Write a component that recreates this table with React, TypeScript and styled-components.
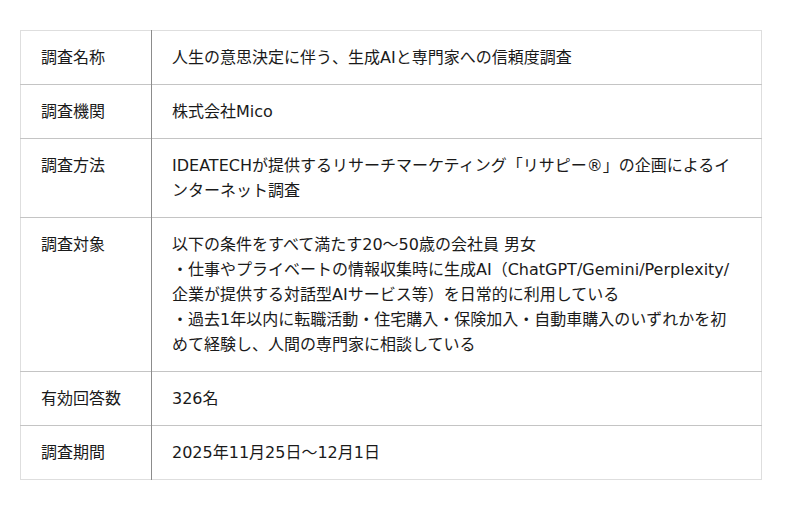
import React from 'react'
import styled, { createGlobalStyle } from 'styled-components'

const GlobalStyle = createGlobalStyle`
  body {
    margin: 0;
    background: #fff;
    font-family: "DejaVu Sans", "Noto Sans CJK JP", sans-serif;
    color: #1a1a1a;
  }
`

const Page = styled.div`
  padding: 30px 0 0 20px;
`

const Table = styled.table`
  width: 742px;
  border-collapse: collapse;
  border: 1px solid #dedede;
  font-size: 16px;
  line-height: 25px;
`

const Row = styled.tr`
  border-bottom: 1px solid #c4c4c4;
  &:last-child {
    border-bottom: 1px solid #dedede;
  }
`

const Label = styled.th`
  width: 90px;
  padding: 14px 20px;
  text-align: left;
  font-weight: normal;
  vertical-align: top;
  border-right: 1px solid #8c8c8c;
  white-space: nowrap;
`

const Value = styled.td`
  padding: 14px 20px;
  vertical-align: top;
`

const rows: [string, React.ReactNode][] = [
  ['調査名称', '人生の意思決定に伴う、生成AIと専門家への信頼度調査'],
  ['調査機関', '株式会社Mico'],
  ['調査方法', 'IDEATECHが提供するリサーチマーケティング「リサピー®」の企画によるインターネット調査'],
  [
    '調査対象',
    <>
      以下の条件をすべて満たす20～50歳の会社員 男女
      <br />
      ・仕事やプライベートの情報収集時に生成AI（ChatGPT/Gemini/Perplexity/企業が提供する対話型AIサービス等）を日常的に利用している
      <br />
      ・過去1年以内に転職活動・住宅購入・保険加入・自動車購入のいずれかを初めて経験し、人間の専門家に相談している
    </>,
  ],
  ['有効回答数', '326名'],
  ['調査期間', '2025年11月25日～12月1日'],
]

export default function App() {
  return (
    <Page>
      <GlobalStyle />
      <Table>
        <tbody>
          {rows.map(([label, value]) => (
            <Row key={label}>
              <Label>{label}</Label>
              <Value>{value}</Value>
            </Row>
          ))}
        </tbody>
      </Table>
    </Page>
  )
}
